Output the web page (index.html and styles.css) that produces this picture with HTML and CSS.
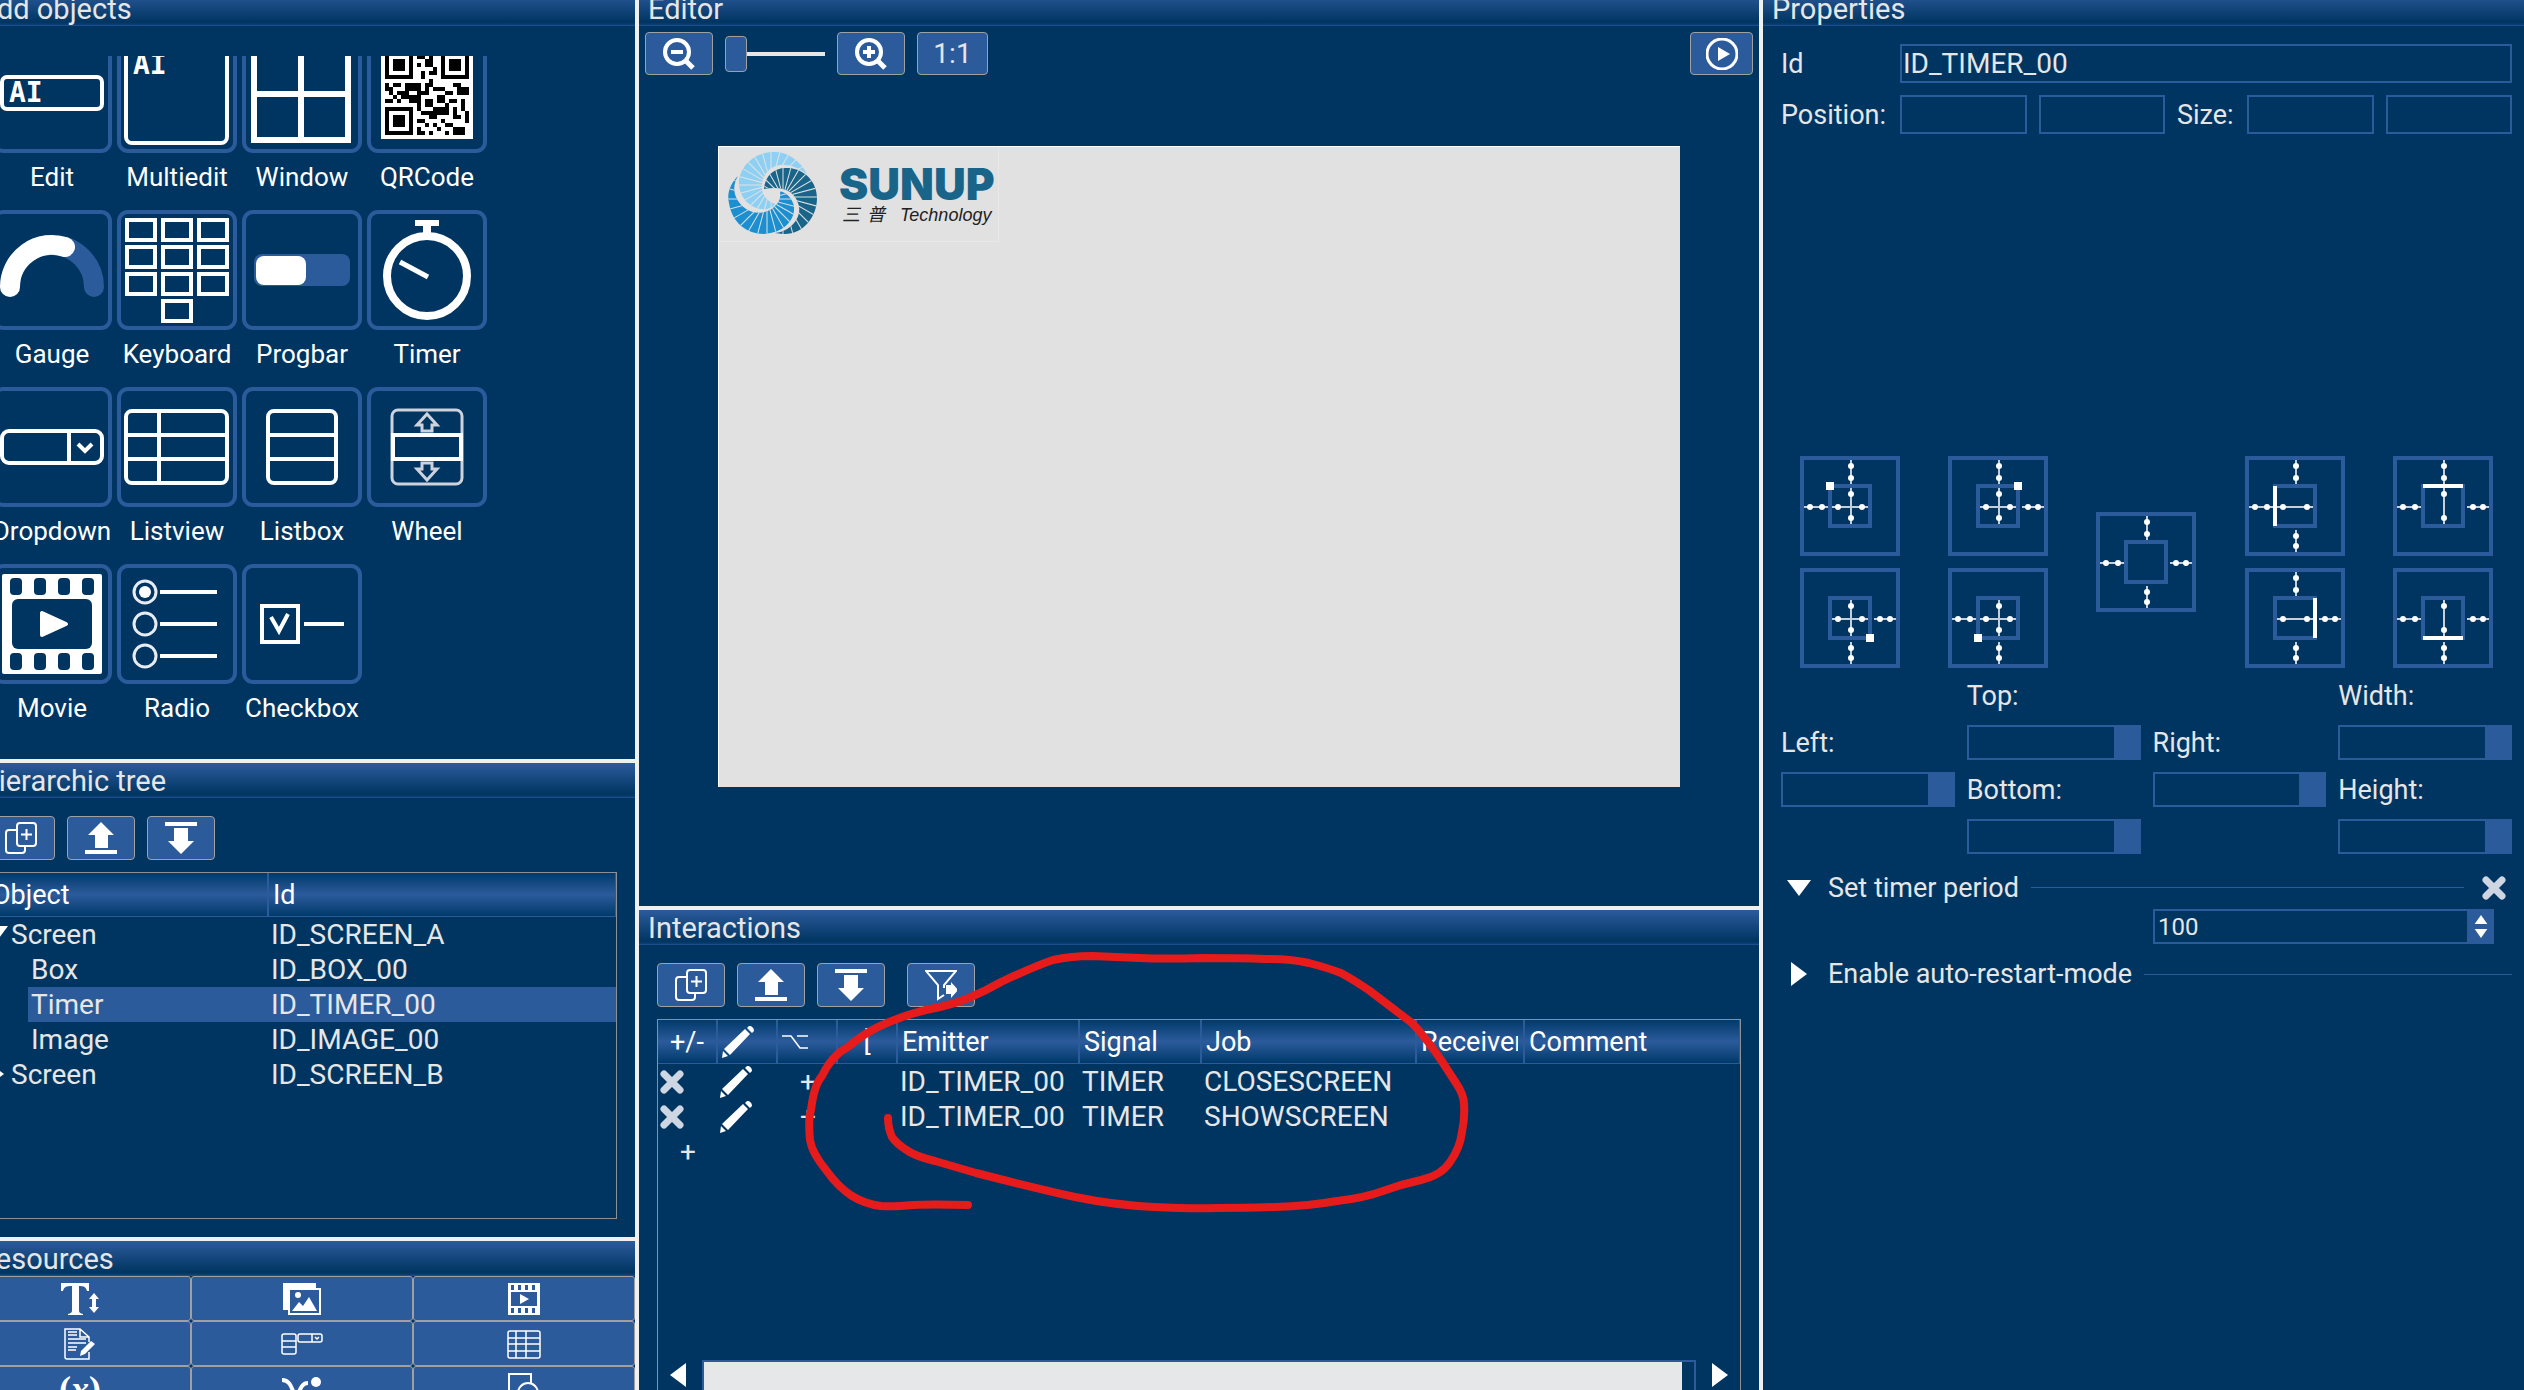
FILE: index.html
```html
<!DOCTYPE html>
<html lang="en">
<head>
<meta charset="utf-8">
<title>Screen designer</title>
<link rel="stylesheet" href="styles.css">
</head>
<body>
<svg class="defs" aria-hidden="true">
  <defs>
    <symbol id="i-copy" viewBox="0 0 32 32"><g fill="none" stroke="#fff" stroke-width="2"><rect x="12" y="1" width="19" height="23" rx="3"/><path d="M12 8H4a3 3 0 0 0-3 3v17a3 3 0 0 0 3 3h13a3 3 0 0 0 3-3v-4M21.500 7v11M16 12.500h11"/></g></symbol>
    <symbol id="i-up" viewBox="0 0 32 32"><path fill="#fff" d="M16 0l13 13h-6v13H10V13H3zM0 28h32v4H0z"/></symbol>
    <symbol id="i-down" viewBox="0 0 32 32"><path fill="#fff" d="M16 32L3 19h6V6h14v13h6zM0 0h32v4H0z"/></symbol>
    <symbol id="i-pencil" viewBox="0 0 32 32"><path fill="#fff" d="M0 32l1-7 5 5zM2 23L23 3l5 5L8 29zM25 2l2-2c3 0 5 2 5 5l-2 2z"/></symbol>
    <symbol id="i-x" viewBox="0 0 24 24"><path d="M4 4l16 16M20 4L4 20" stroke="#cdd6e2" stroke-width="7" stroke-linecap="round"/></symbol>
    <g id="top" stroke="#c3d0dc" stroke-width="2" fill="#fff"><path d="M51 4v24"/><g stroke="none"><circle cx="51" cy="10" r="3"/><circle cx="51" cy="22" r="3"/></g></g>
    <g id="bottom" stroke="#c3d0dc" stroke-width="2" fill="#fff"><path d="M51 74v22"/><g stroke="none"><circle cx="51" cy="80" r="3"/><circle cx="51" cy="90" r="3"/></g></g>
    <g id="left" stroke="#c3d0dc" stroke-width="2" fill="#fff"><path d="M4 51h24"/><g stroke="none"><circle cx="10" cy="51" r="3"/><circle cx="22" cy="51" r="3"/></g></g>
    <g id="right" stroke="#c3d0dc" stroke-width="2" fill="#fff"><path d="M74 51h22"/><g stroke="none"><circle cx="80" cy="51" r="3"/><circle cx="90" cy="51" r="3"/></g></g>
    <g id="hor" stroke="#c3d0dc" stroke-width="2" fill="#fff"><path d="M32 51h36"/><g stroke="none"><circle cx="38" cy="51" r="3"/><circle cx="62" cy="51" r="3"/></g></g>
    <g id="ver" stroke="#c3d0dc" stroke-width="2" fill="#fff"><path d="M51 32v36"/><g stroke="none"><circle cx="51" cy="38" r="3"/><circle cx="51" cy="62" r="3"/></g></g>
    <g id="frame" fill="none" stroke="#2c5b9c" stroke-width="4"><path d="M2 2h96v96H2zM30 30h40v40H30z"/></g>
    <g id="rays" stroke="#e1e1e1" stroke-width="1"><g id="rays4"><g id="rays2"><path id="ray" d="M0-60V60"/><use href="#ray" transform="rotate(15)"/></g><use href="#ray" transform="rotate(30)"/></g><use href="#rays4" transform="rotate(45)"/><use href="#rays4" transform="rotate(90)"/><use href="#rays4" transform="rotate(135)"/></g>
    <path id="sw1" d="M88 27C80 12 68 5 55 5C33 5 20 22 20 36C20 52 34 64 48 62C52 61 55 59 56 57C46 54 40 44 44 32C50 16 68 12 88 27Z"/>
    <path id="sw2" d="M45 42C46 28 56 20 69 21C87 22 98 36 98 51C98 70 84 88 64 87L56 86C74 84 84 68 79 56C76 46 66 38 45 42Z"/>
    <path id="sw3" d="M19 29C10 38 8 48 10 56C13 76 28 87 45 87C64 86 76 74 75 60C74 52 68 46 61 44C62 52 60 56 54 61C42 70 24 66 17 50C14 42 15 36 19 29Z"/>
    <clipPath id="c1"><use href="#sw1"/></clipPath><clipPath id="c2"><use href="#sw2"/></clipPath><clipPath id="c3"><use href="#sw3"/></clipPath>
  </defs>
</svg>

<main class="shell">
  <div class="column column-left">
    <section class="panel">
      <h2 class="panel-title">Add objects</h2>
      <div class="palette">
        <div class="palette-grid">
          <button class="tool"><svg class="tile" viewBox="0 0 120 120"><rect x="10" y="44" width="100" height="32" rx="5" class="line"/><text x="17" y="69" class="caret">AI</text></svg><span>Edit</span></button>
          <button class="tool"><svg class="tile" viewBox="0 0 120 120"><rect x="9" y="9" width="101" height="101" rx="6" class="line"/><text x="16" y="41" class="caret">AI</text></svg><span>Multiedit</span></button>
          <button class="tool"><svg class="tile" viewBox="0 0 120 120"><path d="M12 12h94v95H12zM59 12v95M12 61h94" class="line heavy"/></svg><span>Window</span></button>
          <button class="tool"><svg class="tile" viewBox="0 0 120 120"><path fill="#fff" d="M14 14h92v92H14z"/><g transform="translate(18 18) scale(4)"><path fill="none" stroke="#000" d="M.5.5h6v6h-6zM14.500.5h6v6h-6zM.5 14.500h6v6h-6z"/><path d="M2 2h3v3H2zM16 2h3v3h-3zM2 16h3v3H2zM8 1h2v1H8zM11 0h1v2h-1zM8 3h1v1H8zM10 2h2v2h-2zM12 4h1v2h-1zM9 5h1v2H9zM11 5h1v1h-1zM0 8h1v2H0zM2 8h2v1H2zM5 8h4v2H5zM10 8h1v3h-1zM3 10h3v1H3zM1 9h1v2H1zM0 12h2v1H0zM2 11h1v1H2zM4 11h5v1H4zM3 12h1v1H3zM6 12h3v1H6zM8 10h2v1H8zM11 7h1v2h-1zM12 9h3v1h-3zM15 10h2v1h-2zM13 11h2v2h-2zM17 8h2v1h-2zM18 9h3v2h-3zM16 12h2v1h-2zM19 12h1v3h-1zM8 13h1v2H8zM10 12h2v2h-2zM9 15h3v1H9zM12 14h3v2h-3zM15 13h1v3h-1zM17 14h1v2h-1zM11 16h2v1h-2zM14 17h1v1h-1zM20 15h1v3h-1zM8 17h2v1H8zM10 18h1v1h-1zM8 19h1v2H8zM9 20h1v1H9zM12 18h1v1h-1zM11 20h1v1h-1zM13 19h1v1h-1zM15 18h2v1h-2zM15 20h1v1h-1zM17 16h2v1h-2zM17 19h3v2h-3z"/></g></svg><span>QRCode</span></button>

          <button class="tool"><svg class="tile" viewBox="0 0 120 120" fill="none" stroke-width="20" stroke-linecap="round"><path d="M18 77a42 42 0 0 1 84 0" stroke="#2c5b9c"/><path d="M18 77A42 42 0 0 1 73 37" stroke="#fff"/></svg><span>Gauge</span></button>
          <button class="tool"><svg class="tile" viewBox="0 0 120 120"><path class="line" d="M10 10h28v20H10zM46 10h28v20H46zM82 10h28v20H82zM10 37h28v20H10zM46 37h28v20H46zM82 37h28v20H82zM10 64h28v20H10zM46 64h28v20H46zM82 64h28v20H82zM46 91h28v20H46z"/></svg><span>Keyboard</span></button>
          <button class="tool"><svg class="tile" viewBox="0 0 120 120"><rect x="12" y="44" width="96" height="32" rx="8" fill="#2c5b9c"/><rect x="14" y="46" width="50" height="29" rx="8" fill="#fff"/></svg><span>Progbar</span></button>
          <button class="tool"><svg class="tile" viewBox="0 0 120 120"><circle cx="60" cy="66" r="40" class="line clock"/><path fill="#fff" d="M48 10h24v6h-8v8h-8v-8h-8z"/><path d="M33 52l28 15" stroke="#fff" stroke-width="5"/></svg><span>Timer</span></button>

          <button class="tool"><svg class="tile" viewBox="0 0 120 120"><rect x="10" y="44" width="100" height="32" rx="7" class="line"/><path class="line" d="M77 44v32M86 57l7 7 7-7"/></svg><span>Dropdown</span></button>
          <button class="tool"><svg class="tile" viewBox="0 0 120 120"><rect x="9" y="24" width="101" height="72" rx="6" class="line"/><path class="line" d="M42 24v72M9 48h101M9 72h101"/></svg><span>Listview</span></button>
          <button class="tool"><svg class="tile" viewBox="0 0 120 120"><rect x="26" y="24" width="68" height="72" rx="6" class="line"/><path class="line" d="M26 48h68M26 72h68"/></svg><span>Listbox</span></button>
          <button class="tool"><svg class="tile" viewBox="0 0 120 120"><g fill="none" stroke="#cdd2dc" stroke-width="3"><rect x="25" y="23" width="70" height="74" rx="6"/><path d="M60 27l10 11h-5v6H55v-6h-5zM60 93l10-11h-5v-6H55v6h-5z"/></g><path class="line" d="M26 48h68v24H26z"/></svg><span>Wheel</span></button>

          <button class="tool"><svg class="tile" viewBox="0 0 120 120"><rect x="10" y="10" width="100" height="100" rx="2" fill="#fff"/><g fill="#003561"><rect x="18" y="14" width="12" height="17" rx="4"/><rect x="42" y="14" width="12" height="17" rx="4"/><rect x="66" y="14" width="12" height="17" rx="4"/><rect x="90" y="14" width="12" height="17" rx="4"/><rect x="18" y="89" width="12" height="17" rx="4"/><rect x="42" y="89" width="12" height="17" rx="4"/><rect x="66" y="89" width="12" height="17" rx="4"/><rect x="90" y="89" width="12" height="17" rx="4"/><rect x="20" y="35" width="80" height="50" rx="6"/></g><path d="M50 49v22l24-11z" fill="#fff" stroke="#fff" stroke-width="4" stroke-linejoin="round"/></svg><span>Movie</span></button>
          <button class="tool"><svg class="tile" viewBox="0 0 120 120"><g fill="none" stroke="#e8ecf2" stroke-width="3"><circle cx="28" cy="28" r="11"/><circle cx="28" cy="60" r="11"/><circle cx="28" cy="92" r="11"/></g><circle cx="28" cy="28" r="6" fill="#fff"/><path class="line" d="M43 28h57M43 60h57M43 92h57"/></svg><span>Radio</span></button>
          <button class="tool"><svg class="tile" viewBox="0 0 120 120"><path class="line" d="M20 42h36v36H20zM62 60h40M29 53l8 14 9-17"/></svg><span>Checkbox</span></button>
        </div>
      </div>
    </section>

    <section class="panel">
      <h2 class="panel-title">Hierarchic tree</h2>
      <div class="panel-body">
        <div class="toolbar">
          <button class="btn" aria-label="Duplicate object"><svg><use href="#i-copy"/></svg></button>
          <button class="btn" aria-label="Move object up"><svg><use href="#i-up"/></svg></button>
          <button class="btn" aria-label="Move object down"><svg><use href="#i-down"/></svg></button>
        </div>
        <div class="table-box tree-box">
          <table class="tree">
            <colgroup><col class="c-object"><col></colgroup>
            <thead><tr><th>Object</th><th>Id</th></tr></thead>
            <tbody>
              <tr><td><svg class="twisty" viewBox="0 0 24 24"><path d="M0 4h24L12 20z"/></svg>Screen</td><td>ID_SCREEN_A</td></tr>
              <tr class="child"><td>Box</td><td>ID_BOX_00</td></tr>
              <tr class="child selected"><td>Timer</td><td>ID_TIMER_00</td></tr>
              <tr class="child"><td>Image</td><td>ID_IMAGE_00</td></tr>
              <tr><td><svg class="twisty" viewBox="0 0 24 24"><path d="M4 0v24l16-12z"/></svg>Screen</td><td>ID_SCREEN_B</td></tr>
            </tbody>
          </table>
        </div>
      </div>
    </section>

    <section class="panel">
      <h2 class="panel-title">Resources</h2>
      <div class="resources">
        <button aria-label="Fonts"><svg viewBox="0 0 38 32"><path fill="#fff" d="M0 0h28v8h-2c-1-4-3-5-8-5v24c0 3 1 3 4 4v1H7v-1c3-1 4-1 4-4V3C5 3 3 4 2 8H0zM33 10l5 6h-3v8h3l-5 6-5-6h3v-8h-3z"/></svg></button>
        <button aria-label="Images"><svg viewBox="0 0 38 32"><path fill="#fff" d="M0 0h33v5H6v22H0z"/><rect x="6" y="6" width="31" height="25" fill="none" stroke="#fff" stroke-width="2"/><circle cx="15" cy="12" r="3" fill="#fff"/><path fill="#fff" d="M9 28l7-9 4 4 6-9 8 14z"/></svg></button>
        <button aria-label="Movies"><svg viewBox="0 0 38 32"><path fill="#fff" fill-rule="evenodd" d="M3 0h32v32H3zM6 2v5h3V2zM13 2v5h3V2zM20 2v5h3V2zM27 2v5h3V2zM6 25v5h3v-5zM13 25v5h3v-5zM20 25v5h3v-5zM27 25v5h3v-5zM6 9v14h26V9z"/><path fill="#fff" d="M15 11v10l9-5z"/></svg></button>
        <button aria-label="Text files"><svg viewBox="0 0 38 32"><path fill="none" stroke="#fff" stroke-width="1.500" d="M28 24v7H6a2 2 0 0 1-2-2V1h15l9 8v5M19 1v8h9M7 4h9M7 7h9M7 11h18M7 15h18M7 19h9M7 22h8"/><path fill="#fff" d="M19 28l1-5 10-10 4 3-10 10z"/></svg></button>
        <button aria-label="Lists"><svg viewBox="0 0 42 32"><g fill="none" stroke="#fff" stroke-width="1.500"><rect x="1" y="6" width="14" height="20" rx="2"/><path d="M1 13h14M1 19h14M31 6v8M34 9l2 2 2-2"/><rect x="17" y="6" width="24" height="8" rx="2"/></g></svg></button>
        <button aria-label="Tables"><svg viewBox="0 0 38 32"><g fill="none" stroke="#fff" stroke-width="1.500"><rect x="3" y="3" width="32" height="27" rx="2"/><path d="M3 10h32M3 16h32M3 23h32M11 3v27M21 3v27"/></g></svg></button>
        <button class="variables">(<i>x</i>)</button>
        <button aria-label="Functions"><svg viewBox="0 0 40 32"><path fill="none" stroke="#fff" stroke-width="4" d="M0 7c10 0 10 12 16 22M26 10c-8 0-8 10-14 18"/><circle cx="34" cy="9" r="5" fill="#fff"/></svg></button>
        <button aria-label="Shapes"><svg viewBox="0 0 38 32"><path fill="none" stroke="#fff" stroke-width="2" d="M13 22H4V1h22v9"/><circle cx="23" cy="20" r="10" fill="none" stroke="#fff" stroke-width="2"/></svg></button>
      </div>
    </section>
  </div>

  <div class="column column-center">
    <section class="panel">
      <h2 class="panel-title">Editor</h2>
      <div class="toolbar editor-bar">
        <button class="btn" aria-label="Zoom out"><svg viewBox="0 0 32 32"><g fill="none" stroke="#fff"><circle cx="14" cy="14" r="12" stroke-width="4"/><path d="M8 14h12" stroke-width="4"/><path d="M23 23l7 7" stroke-width="5"/></g></svg></button>
        <input type="range" class="zoom" aria-label="Zoom" min="0" max="100" value="0">
        <button class="btn" aria-label="Zoom in"><svg viewBox="0 0 32 32"><g fill="none" stroke="#fff"><circle cx="14" cy="14" r="12" stroke-width="4"/><path d="M8 14h12M14 8v12" stroke-width="4"/><path d="M23 23l7 7" stroke-width="5"/></g></svg></button>
        <button class="btn ratio">1:1</button>
        <button class="btn play" aria-label="Run"><svg viewBox="0 0 32 32"><circle cx="16" cy="16" r="15" fill="none" stroke="#fff" stroke-width="3"/><path fill="#fff" d="M12 9v14l12-7z"/></svg></button>
      </div>
      <div class="canvas">
        <div class="logo">
          <svg class="swirl" viewBox="0 0 104 94"><use href="#sw1" fill="#8ed0f3"/><use href="#sw2" fill="#19658a"/><use href="#sw3" fill="#1b8fd0"/><g clip-path="url(#c1)"><use href="#rays" x="52" y="38"/></g><g clip-path="url(#c2)"><use href="#rays" x="64" y="50"/></g><g clip-path="url(#c3)"><use href="#rays" x="48" y="52"/></g></svg>
          <div class="brand">
            <strong>SUNUP</strong>
            <div class="brand-sub"><span>三</span><span>普</span><em>Technology</em></div>
          </div>
        </div>
      </div>
    </section>

    <section class="panel interactions">
      <h2 class="panel-title">Interactions</h2>
      <div class="panel-body">
        <div class="toolbar">
          <button class="btn" aria-label="Duplicate interaction"><svg><use href="#i-copy"/></svg></button>
          <button class="btn" aria-label="Move interaction up"><svg><use href="#i-up"/></svg></button>
          <button class="btn" aria-label="Move interaction down"><svg><use href="#i-down"/></svg></button>
          <button class="btn filter" aria-label="Filter"><svg viewBox="0 0 32 32"><path fill="none" stroke="#fff" stroke-width="2" d="M19 26l-6 4V16L1 2h30L19 16v3"/><path fill="#fff" d="M21 16h5v-3l7 8-7 8v-4h-5z"/></svg></button>
        </div>
        <div class="table-box jobs-box">
          <table class="jobs">
            <colgroup><col class="c-tool"><col class="c-tool"><col class="c-tool"><col class="c-tool"><col class="c-emitter"><col class="c-signal"><col class="c-job"><col class="c-receiver"><col></colgroup>
            <thead><tr><th class="mid">+/-</th><th><svg class="pencil"><use href="#i-pencil"/></svg></th><th><svg class="option" viewBox="0 0 26 16"><path d="M0 2h9l9 12h8M15 2h11" fill="none" stroke="#fff" stroke-width="1.500"/></svg></th><th class="mid">[</th><th>Emitter</th><th>Signal</th><th>Job</th><th><div class="cut">Receiver</div></th><th>Comment</th></tr></thead>
            <tbody>
              <tr><td><svg class="cross"><use href="#i-x"/></svg></td><td><svg class="pencil"><use href="#i-pencil"/></svg></td><td class="mid">+</td><td></td><td>ID_TIMER_00</td><td>TIMER</td><td>CLOSESCREEN</td><td></td><td></td></tr>
              <tr><td><svg class="cross"><use href="#i-x"/></svg></td><td><svg class="pencil"><use href="#i-pencil"/></svg></td><td class="mid">+</td><td></td><td>ID_TIMER_00</td><td>TIMER</td><td>SHOWSCREEN</td><td></td><td></td></tr>
              <tr><td class="mid">+</td><td></td><td></td><td></td><td></td><td></td><td></td><td></td><td></td></tr>
            </tbody>
          </table>
          <div class="scrollbar">
            <button aria-label="Scroll left"><svg viewBox="0 0 16 24"><path fill="#fff" d="M16 0v24L0 12z"/></svg></button>
            <div class="trough"><div class="thumb"></div></div>
            <button aria-label="Scroll right"><svg viewBox="0 0 16 24"><path fill="#fff" d="M0 0v24l16-12z"/></svg></button>
          </div>
        </div>
      </div>
      <svg class="marker" viewBox="639 910 1120 480" preserveAspectRatio="xMinYMin meet" aria-hidden="true"><path d="M968 1205Q932 1204 913 1205Q893 1207 881 1206Q865 1204 852 1196Q838 1187 826 1170Q812 1153 810 1140Q808 1120 811 1110Q814 1085 822 1076Q832 1055 848 1047Q865 1032 889 1022Q913 1012 940 1007Q968 1001 1001 982Q1035 966 1053 960Q1071 956 1092 956Q1114 957 1140 958Q1166 959 1203 958Q1240 958 1266 959Q1292 959 1309 963Q1328 968 1341 973Q1354 980 1370 991L1412 1023Q1428 1040 1443 1063L1456 1083Q1464 1095 1464 1104Q1465 1117 1462 1132Q1460 1148 1450 1162Q1442 1175 1421 1180Q1402 1184 1383 1191Q1364 1198 1337 1201Q1309 1206 1275 1207Q1240 1208 1217 1208Q1194 1209 1154 1207Q1114 1205 1075 1197Q1035 1188 976 1173L935 1161Q914 1156 905 1149Q896 1143 892 1137Q888 1128 888 1118"/></svg>
    </section>
  </div>

  <section class="panel column-right">
    <h2 class="panel-title">Properties</h2>
    <form class="props">
      <div class="row"><label for="id" class="wide">Id</label><input id="id" type="text" value="ID_TIMER_00"></div>
      <div class="row pos">
        <label for="px" class="wide">Position:</label><input id="px" type="text"><input type="text" aria-label="Position y" class="second">
        <label for="sw" class="size">Size:</label><input id="sw" type="text"><input type="text" aria-label="Size height" class="second">
      </div>
      <div class="anchors">
        <div class="pair">
          <button type="button" aria-label="Anchor top left"><svg viewBox="0 0 100 100"><use href="#frame"/><use href="#top"/><use href="#left"/><use href="#hor"/><use href="#ver"/><path fill="#fff" d="M26 26h8v8h-8z"/></svg></button>
          <button type="button" aria-label="Anchor bottom right"><svg viewBox="0 0 100 100"><use href="#frame"/><use href="#bottom"/><use href="#right"/><use href="#hor"/><use href="#ver"/><path fill="#fff" d="M66 66h8v8h-8z"/></svg></button>
        </div>
        <div class="pair">
          <button type="button" aria-label="Anchor top right"><svg viewBox="0 0 100 100"><use href="#frame"/><use href="#top"/><use href="#right"/><use href="#hor"/><use href="#ver"/><path fill="#fff" d="M66 26h8v8h-8z"/></svg></button>
          <button type="button" aria-label="Anchor bottom left"><svg viewBox="0 0 100 100"><use href="#frame"/><use href="#bottom"/><use href="#left"/><use href="#hor"/><use href="#ver"/><path fill="#fff" d="M26 66h8v8h-8z"/></svg></button>
        </div>
        <div class="pair">
          <button type="button" aria-label="Anchor all sides"><svg viewBox="0 0 100 100"><use href="#frame"/><use href="#top"/><use href="#bottom"/><use href="#left"/><use href="#right"/></svg></button>
        </div>
        <div class="pair">
          <button type="button" aria-label="Dock left"><svg viewBox="0 0 100 100"><use href="#frame"/><use href="#top"/><use href="#bottom"/><use href="#left"/><use href="#hor"/><path fill="#fff" d="M28 30h4v40h-4z"/></svg></button>
          <button type="button" aria-label="Dock right"><svg viewBox="0 0 100 100"><use href="#frame"/><use href="#top"/><use href="#bottom"/><use href="#right"/><use href="#hor"/><path fill="#fff" d="M68 30h4v40h-4z"/></svg></button>
        </div>
        <div class="pair">
          <button type="button" aria-label="Dock top"><svg viewBox="0 0 100 100"><use href="#frame"/><use href="#top"/><use href="#left"/><use href="#right"/><use href="#ver"/><path fill="#fff" d="M30 28h40v4H30z"/></svg></button>
          <button type="button" aria-label="Dock bottom"><svg viewBox="0 0 100 100"><use href="#frame"/><use href="#bottom"/><use href="#left"/><use href="#right"/><use href="#ver"/><path fill="#fff" d="M30 68h40v4H30z"/></svg></button>
        </div>
      </div>
      <div class="edges">
        <div class="edge low"><label for="left-in">Left:</label><input class="spin" id="left-in" type="text"></div>
        <div class="edge"><label for="top-in">Top:</label><input class="spin" id="top-in" type="text"><label for="bottom-in">Bottom:</label><input class="spin" id="bottom-in" type="text"></div>
        <div class="edge low"><label for="right-in">Right:</label><input class="spin" id="right-in" type="text"></div>
        <div class="edge"><label for="width-in">Width:</label><input class="spin" id="width-in" type="text"><label for="height-in">Height:</label><input class="spin" id="height-in" type="text"></div>
      </div>
      <div class="group open">
        <svg class="fold" viewBox="0 0 24 24"><path d="M0 4h24L12 20z"/></svg><label for="period">Set timer period</label><span class="rule"></span><button type="button" class="clear" aria-label="Remove timer period"><svg class="cross"><use href="#i-x"/></svg></button>
      </div>
      <div class="period"><input id="period" type="text" value="100"><span class="steps"><button type="button" aria-label="Increase"><svg viewBox="0 0 14 10"><path fill="#fff" d="M7 0l7 10H0z"/></svg></button><button type="button" aria-label="Decrease"><svg viewBox="0 0 14 10"><path fill="#fff" d="M0 0h14L7 10z"/></svg></button></span></div>
      <div class="group">
        <svg class="fold" viewBox="0 0 24 24"><path d="M4 0v24l16-12z"/></svg><span>Enable auto-restart-mode</span><span class="rule"></span>
      </div>
    </form>
  </section>
</main>
</body>
</html>
```
FILE: styles.css
```css
:root {
  --navy: #003561;
  --blue: #2c5b9c;
  --light: #e6e6e6;
  --split: #f0f0f0;
  --edge: #8c8f94;
}

* { box-sizing: border-box; }

body {
  margin: 0;
  height: 100vh;
  overflow: hidden;
  background: var(--split);
  color: var(--light);
  font: 27px/36px Roboto, "Noto Sans CJK SC", sans-serif;
}

button, input { font: inherit; color: inherit; margin: 0; padding: 0; border-radius: 0; }
button { background: none; border: 0; }
svg { display: block; }
.defs { position: absolute; width: 0; height: 0; }

/* The workspace starts a little above and left of the viewport. */
.shell {
  display: grid;
  grid-template-columns: minmax(0, 666fr) minmax(0, 1120fr) minmax(0, 761fr);
  gap: 4px;
  height: calc(100vh + 9px);
  margin: -9px 0 0 -31px;
}

.column { display: grid; gap: 4px; min-height: 0; }
.column-left { grid-template-rows: minmax(0, 768fr) minmax(0, 474fr) minmax(0, 149fr); }
.column-center { grid-template-rows: minmax(0, 915fr) minmax(0, 480fr); }

.panel {
  display: flex;
  flex-direction: column;
  overflow: hidden;
  background: var(--navy);
}

.panel-title {
  flex: none;
  height: 35px;
  margin: 0;
  padding-left: 9px;
  border-bottom: 1px solid #1f4d8b;
  background: linear-gradient(var(--blue), var(--navy) 92%, #0d4076);
  font-size: 29px;
  font-weight: 400;
  line-height: 36px;
}

.panel-body {
  display: flex;
  flex-direction: column;
  flex: 1;
  min-height: 0;
  padding: 18px 18px 0;
}

/* Object palette */
.palette { margin-top: 30px; padding-left: 23px; overflow: hidden; }
.palette-grid {
  display: grid;
  grid-template-columns: repeat(4, 120px);
  gap: 9px 5px;
  margin-top: -23px;
}
.tool {
  display: flex;
  flex-direction: column;
  align-items: center;
  color: #fff;
  font-size: 26px;
  line-height: 48px;
  white-space: nowrap;
}
.tile { width: 120px; height: 120px; box-shadow: inset 0 0 0 4px var(--blue); border-radius: 11px; }
.line { fill: none; stroke: #fff; stroke-width: 4px; }
.heavy { stroke-width: 6px; }
.clock { stroke-width: 8px; }
.caret { fill: #fff; font: bold 28px "DejaVu Sans Mono", monospace; }

/* Toolbars */
.toolbar { display: flex; gap: 12px; }
.btn {
  display: flex;
  align-items: center;
  justify-content: center;
  width: 68px;
  height: 44px;
  border: 1px solid #a0a0a0;
  border-radius: 4px;
  background: var(--blue);
}
.btn svg { width: 32px; height: 32px; }
.editor-bar { padding: 6px 6px 0; }
.editor-bar .btn { height: 43px; }
.editor-bar .ratio { width: 71px; font-size: 28px; }
.editor-bar .play { width: 63px; margin-left: auto; }
.filter { margin-left: 10px; }

.zoom { width: 100px; height: 43px; appearance: none; background: none; }
.zoom::-webkit-slider-runnable-track { height: 4px; background: var(--light); }
.zoom::-webkit-slider-thumb {
  appearance: none;
  width: 22px;
  height: 36px;
  margin-top: -16px;
  border: 1px solid #a0a0a0;
  border-radius: 4px;
  background: var(--blue);
}

/* Tables */
.table-box { margin-top: 12px; border: 1px solid var(--edge); min-height: 0; }
.tree-box { flex: 1; margin-bottom: 18px; }
table { width: 100%; border-collapse: separate; border-spacing: 0; table-layout: fixed; }
th {
  height: 44px;
  padding: 0 0 0 4px;
  border-bottom: 1px solid var(--blue);
  border-right: 2px solid var(--blue);
  background: linear-gradient(#003a6a, var(--blue) 50%, #003a6a);
  color: #fff;
  font-weight: 400;
  text-align: left;
}
td { height: 35px; padding: 0 0 0 2px; font-size: 28px; line-height: 35px; white-space: nowrap; }
th.mid, td.mid { padding: 0; text-align: center; }
.c-object { width: 281px; }
.tree td:first-child { padding-left: 23px; }
.tree .child td:first-child { padding-left: 43px; }
.tree th:last-child, .jobs th:last-child { border-right-width: 1px; }
.selected td { background: var(--blue); }
.selected td:first-child { background: linear-gradient(90deg, var(--navy) 40px, var(--blue) 40px); }
.twisty { float: left; width: 24px; height: 24px; margin: 5px 0 0 -27px; fill: #fff; }

.jobs-box { display: flex; flex-direction: column; flex: 1; border-bottom: 0; }
.c-tool { width: 60px; }
.c-emitter { width: 182px; }
.c-signal { width: 122px; }
.c-job { width: 215px; }
.c-receiver { width: 108px; }
.cut { width: 97px; overflow: hidden; }
.pencil { width: 32px; height: 32px; }
.cross { width: 24px; height: 24px; }
.option { width: 26px; height: 16px; }

.scrollbar { display: flex; justify-content: space-between; height: 30px; margin-top: auto; padding: 0 12px; }
.scrollbar svg { width: 16px; height: 24px; }
.trough { flex: 1; margin: 0 16px; padding-right: 12px; border: 2px solid var(--blue); border-bottom: 0; }
.thumb { height: 100%; background: #e6e7e8; }

.interactions { position: relative; }
.marker { position: absolute; inset: 0; width: 100%; height: 100%; pointer-events: none; }
.marker path { fill: none; stroke: #e61c1c; stroke-width: 8px; stroke-linecap: round; stroke-linejoin: round; }

/* Resources */
.resources { display: grid; grid-template-columns: repeat(3, 1fr); grid-auto-rows: 45px; flex: none; }
.resources button {
  display: flex;
  align-items: center;
  justify-content: center;
  border: 1px solid #a0a0a0;
  border-radius: 3px;
  background: var(--blue);
}
.resources svg { height: 32px; }
.resources .variables { color: #fff; font: bold 36px/36px "Liberation Serif", serif; }

/* Editor canvas */
.canvas {
  margin: 71px 79px 0;
  aspect-ratio: 962 / 641;
  border-top: 1px solid #fff;
  border-left: 1px solid #fff;
  background: #e1e1e1;
}
.logo { display: flex; gap: 16px; width: 280px; height: 95px; border-right: 1px solid #e8e8e8; border-bottom: 1px solid #e8e8e8; }
.swirl { width: 104px; height: 94px; }
.brand { padding-top: 17px; color: #19658a; }
.brand strong { display: block; font: 900 44px/40px Inter, sans-serif; }
.brand-sub {
  display: flex;
  gap: 7px;
  padding-left: 3px;
  color: #222;
  font: italic 18px/22px "Liberation Sans", "Noto Sans CJK SC", sans-serif;
}
.brand-sub em { margin-left: 8px; }

/* Properties */
.props { padding: 18px 12px 0 18px; }
.row { display: flex; height: 39px; margin-bottom: 12px; line-height: 40px; }
.wide { flex: none; width: 119px; }
.size { flex: none; width: 70px; margin-left: 12px; }
.second { margin-left: 12px; }
.props input {
  flex: 1;
  min-width: 0;
  border: 2px solid var(--blue);
  background: var(--navy);
  outline: 0;
}
.row input { padding: 1px 0 0 1px; font-size: 28px; }
.anchors {
  display: grid;
  grid-template-columns: repeat(5, 1fr);
  gap: 10px;
  margin-top: 322px;
  align-items: center;
}
.pair { display: grid; gap: 12px; justify-items: center; }
.pair svg { width: 100px; height: 100px; }
.edges { display: grid; grid-template-columns: repeat(4, 1fr); gap: 12px; margin-top: 10px; }
.edge { display: grid; grid-auto-rows: 35px; align-content: start; gap: 12px; }
.low { padding-top: 47px; }
.props .spin { width: 100%; border-right-width: 27px; }
.group { display: flex; align-items: center; height: 36px; margin-top: 12px; padding-left: 6px; }
.open { height: 43px; padding-right: 6px; }
.fold { width: 24px; height: 24px; margin-right: 17px; fill: #fff; }
.rule { flex: 1; height: 1px; margin-left: 12px; background: var(--blue); }
.clear { margin-left: 18px; }
.period { display: flex; height: 35px; margin: 0 18px 0 372px; font-size: 24px; }
.props .period input { border-right: 0; padding: 1px 0 0 3px; }
.steps { display: flex; flex-direction: column; justify-content: space-evenly; align-items: center; width: 27px; background: var(--blue); }
.steps svg { width: 14px; height: 9px; }
```
